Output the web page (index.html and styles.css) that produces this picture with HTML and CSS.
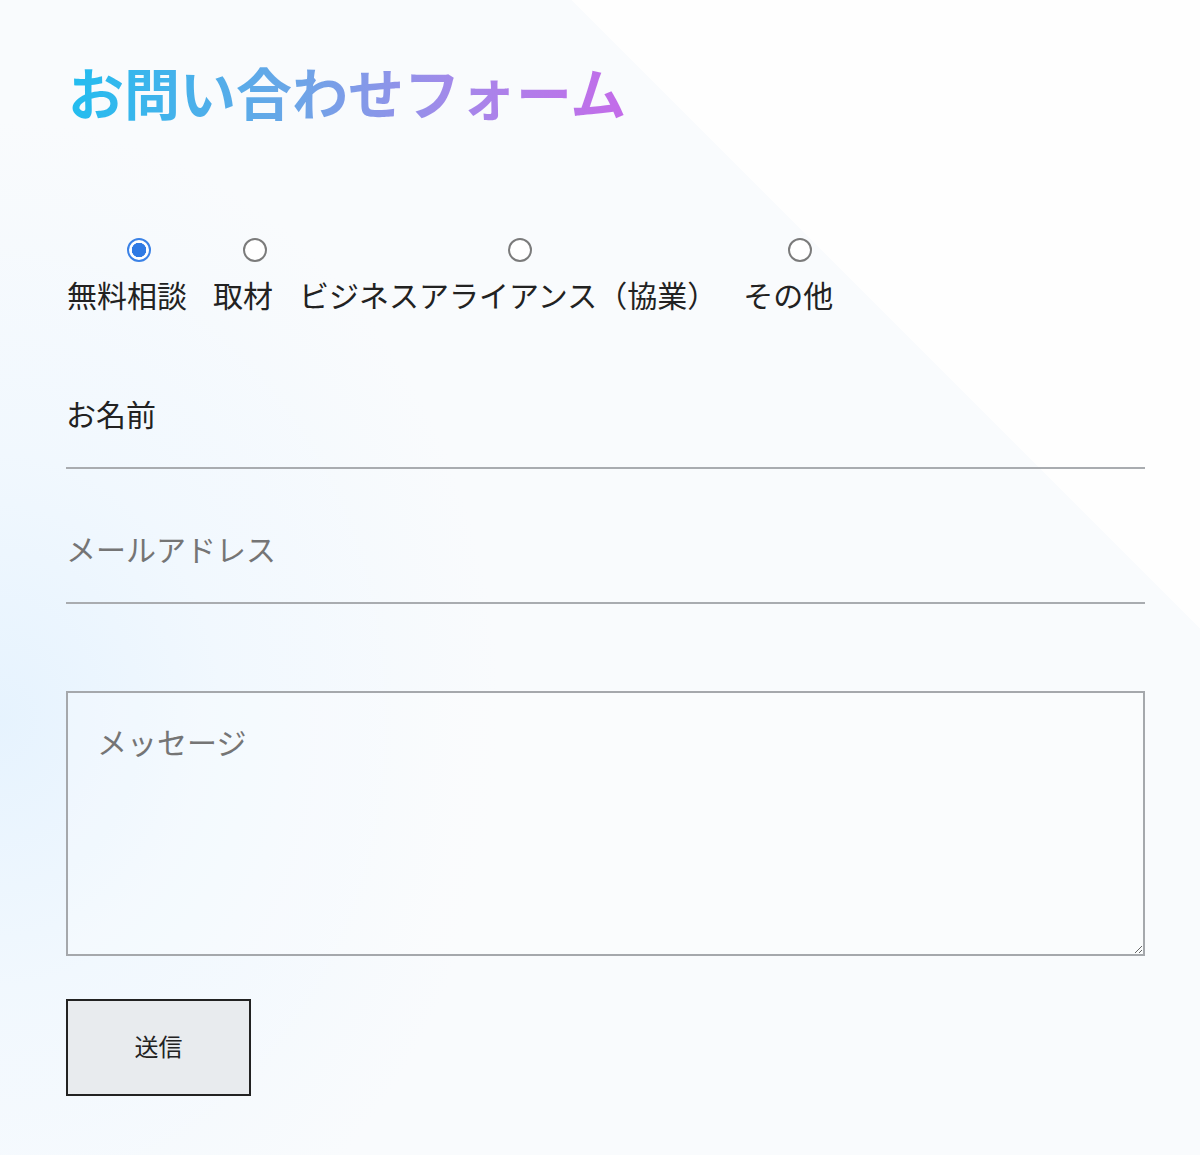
FILE: index.html
```html
<!DOCTYPE html>
<html lang="ja">

<head>
  <meta charset="UTF-8">
  <meta name="viewport" content="width=device-width, initial-scale=1.0">
  <title>お問い合わせフォーム</title>
  <link rel="stylesheet" href="styles.css">
</head>

<body>
  <div class="contact-container">
    <h1 class="contact-title">お問い合わせフォーム</h1>

    <form class="contact-form" onsubmit="return false;">
      <div class="type-group">
        <label class="type-item">
          <input type="radio" name="type" value="consult" checked>
          <span>無料相談</span>
        </label>
        <label class="type-item">
          <input type="radio" name="type" value="interview">
          <span>取材</span>
        </label>
        <label class="type-item">
          <input type="radio" name="type" value="alliance">
          <span>ビジネスアライアンス（協業）</span>
        </label>
        <label class="type-item">
          <input type="radio" name="type" value="other">
          <span>その他</span>
        </label>
      </div>

      <input type="text" class="line-input name-input" placeholder="お名前">
      <input type="email" class="line-input" placeholder="メールアドレス">

      <textarea class="message-input" placeholder="メッセージ"></textarea>

      <button type="submit" class="submit-button">送信</button>
    </form>
  </div>
</body>

</html>
```

FILE: styles.css
```css
* {
  box-sizing: border-box;
  margin: 0;
  padding: 0;
  font-family: 'Noto Sans CJK JP', 'Noto Sans', sans-serif;
}

html,
body {
  min-height: 1155px;
}

body {
  background:
    radial-gradient(ellipse 500px 600px at 0 720px, rgba(228, 242, 254, 0.9) 0, rgba(236, 246, 255, 0.6) 45%, rgba(248, 251, 254, 0) 100%),
    linear-gradient(225deg, #fefefe 0, #fefefe 26.7%, #f9fbfd 26.7%, #f9fbfd 100%);
  color: #222;
}

.contact-container {
  width: 1079px;
  margin-left: 66px;
  padding-top: 51px;
}

.contact-title {
  font-size: 56px;
  line-height: 80px;
  font-weight: 700;
  background: linear-gradient(90deg, #22bdef 0%, #6aa6e7 40%, #a588ea 70%, #c46be9 100%);
  -webkit-background-clip: text;
  background-clip: text;
  color: transparent;
  display: inline-block;
  margin-left: 2px;
}

.contact-form {
  display: flex;
  flex-direction: column;
}

.type-group {
  display: flex;
  gap: 26px;
  margin-top: 107px;
  padding-left: 1px;
}

.type-item {
  display: flex;
  flex-direction: column;
  align-items: center;
  gap: 12px;
  font-size: 30px;
  line-height: 40px;
  color: #222;
  cursor: pointer;
}

.type-item input[type="radio"] {
  appearance: none;
  -webkit-appearance: none;
  width: 24px;
  height: 24px;
  margin-left: 24px;
  border: 2px solid #7b7b7b;
  border-radius: 50%;
  background: #fff;
  cursor: pointer;
}

.type-item input[type="radio"]:checked {
  border-color: #3b82e6;
  background: radial-gradient(circle, #2f7ae4 0, #2f7ae4 7px, #fff 7.5px);
}

.line-input {
  width: 100%;
  height: 106px;
  padding-bottom: 5px;
  border: none;
  border-bottom: 2px solid #a9acb0;
  background: transparent;
  font-size: 30px;
  color: #222;
  outline: none;
}

.name-input {
  margin-top: 49px;
}

.line-input + .line-input {
  margin-top: 29px;
}

.line-input::placeholder {
  color: #757575;
}

.name-input::placeholder {
  color: #222;
}

.message-input {
  width: 100%;
  height: 265px;
  margin-top: 87px;
  padding: 28px 29px;
  border: 2px solid #a5a8ac;
  background: rgba(255, 255, 255, 0.25);
  font-size: 30px;
  line-height: 40px;
  color: #222;
  outline: none;
}

.message-input::placeholder {
  color: #757575;
}

.submit-button {
  width: 185px;
  height: 97px;
  margin-top: 43px;
  padding-bottom: 5px;
  border: 2px solid #222;
  background: #e8ebee;
  color: #222;
  font-size: 24px;
  cursor: pointer;
}
```
